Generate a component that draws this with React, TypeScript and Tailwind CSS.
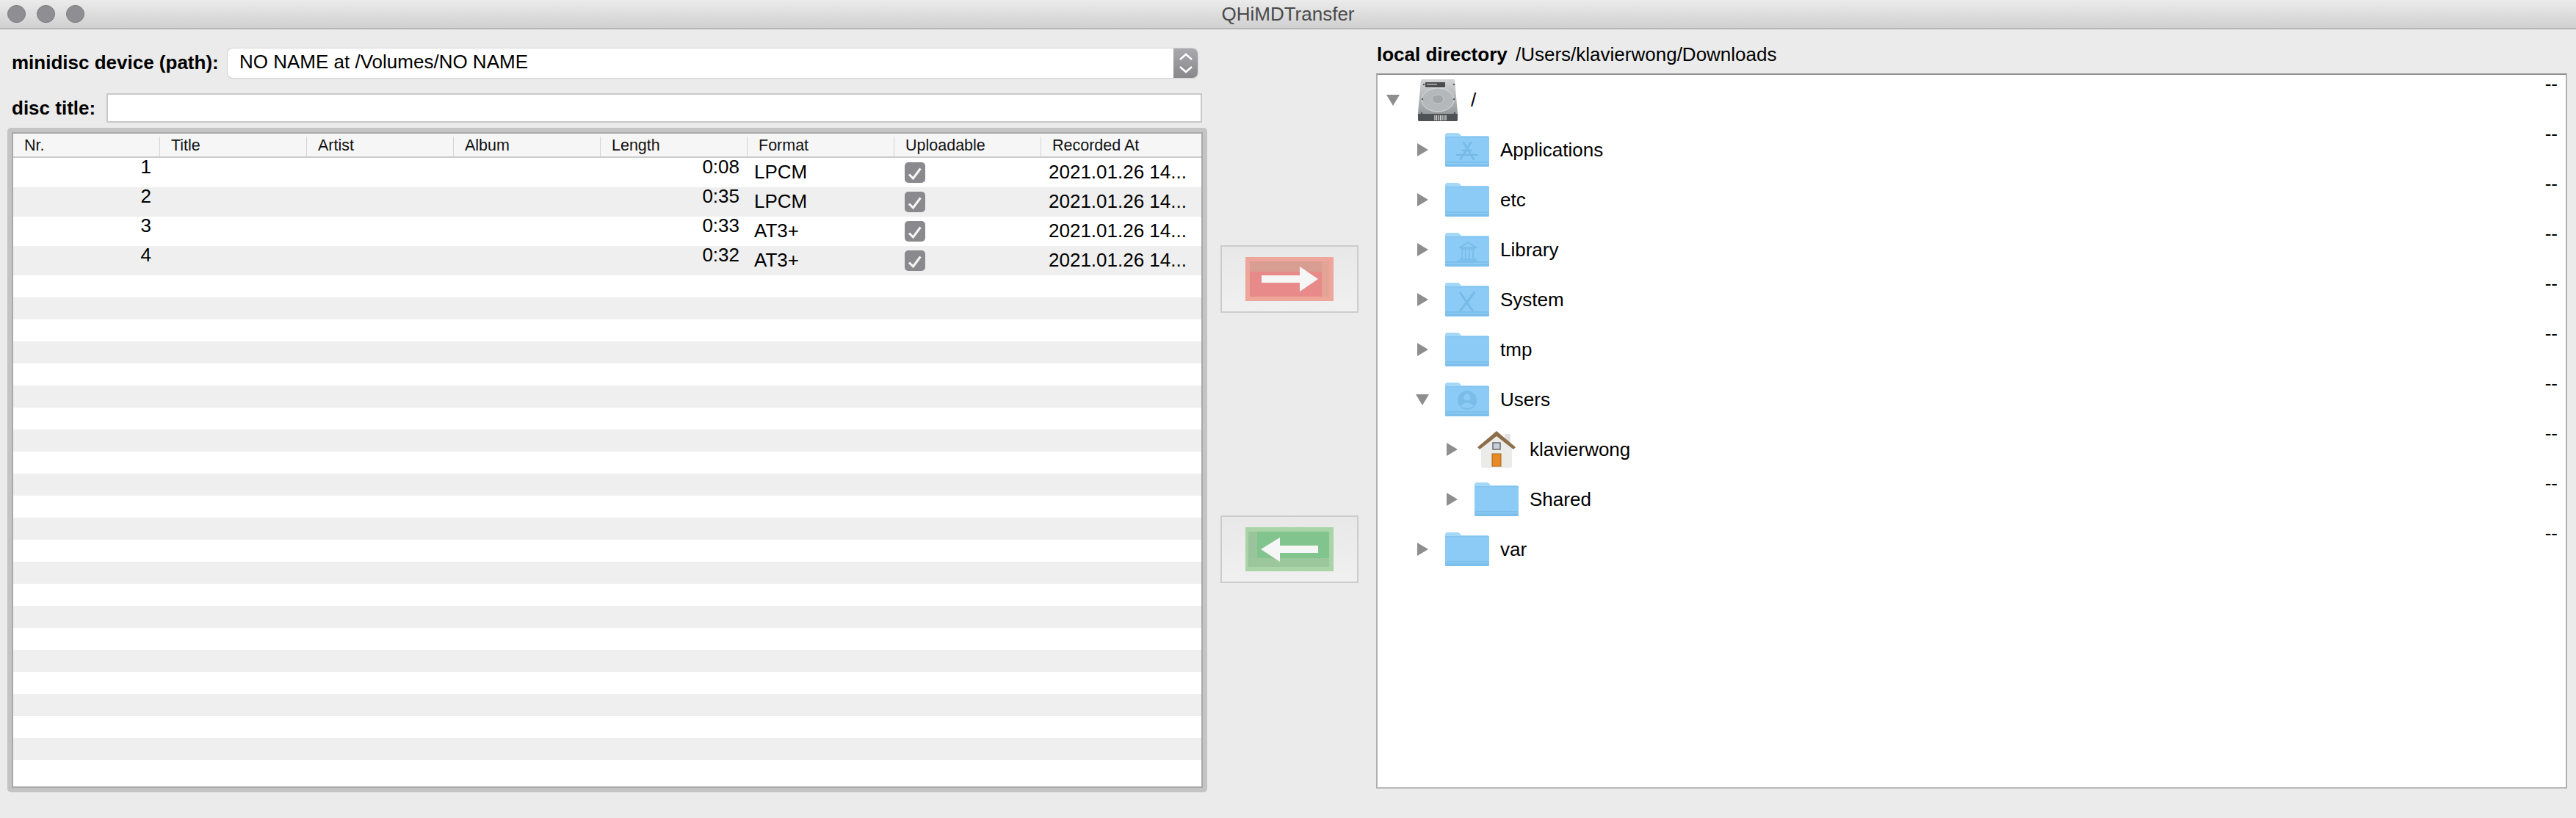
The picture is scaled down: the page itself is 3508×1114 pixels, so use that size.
const tracks = [
  { nr: 1, length: "0:08", format: "LPCM" },
  { nr: 2, length: "0:35", format: "LPCM" },
  { nr: 3, length: "0:33", format: "AT3+" },
  { nr: 4, length: "0:32", format: "AT3+" },
];

const columns = ["Nr.", "Title", "Artist", "Album", "Length", "Format", "Uploadable", "Recorded At"];

function Check() {
  return (
    <div className="w-[28px] h-[28px] rounded-[5px] bg-[#8a8a8e] flex items-center justify-center">
      <svg width="28" height="28" viewBox="0 0 28 28" fill="none">
        <path d="M6 16.500 L11.500 22 L21.500 8.500" stroke="#f6f6f6" strokeWidth="3" />
      </svg>
    </div>
  );
}

function TrackTable() {
  return (
    <div className="mt-[7px] h-[905px] rounded-[5px] border-[6px] border-[#c4c4c4] bg-white">
      <div className="h-full border-2 border-[#a8a8a8] overflow-hidden">
        <div className="flex h-[33px] bg-[#f6f6f6] border-b-2 border-[#cccccc] text-[21.5px] text-[#111]">
          {columns.map((c, i) => (
            <div key={c} className={`h-[27px] mt-[4px] shrink-0 pl-[15px] leading-[24px] ${i > 0 ? "w-[200px] border-l border-[#d4d4d4]" : "w-[199px]"}`}>
              {c}
            </div>
          ))}
        </div>
        {tracks.map((t, i) => (
          <div key={t.nr} className={`flex h-[40px] text-[26px] text-black ${i % 2 ? "bg-[#efefef]" : "bg-white"}`}>
            <div className="w-[188px] shrink-0 text-right leading-[24px]">{t.nr}</div>
            <div className="w-[801px] shrink-0 text-right leading-[24px]">{t.length}</div>
            <div className="w-[205px] shrink-0 pl-[20px] leading-[39px]">{t.format}</div>
            <div className="w-[216px] shrink-0 pl-[20px] flex items-center"><Check /></div>
            <div className="leading-[39px] whitespace-nowrap">2021.01.26 14...</div>
          </div>
        ))}
        {Array.from({ length: 23 }).map((_, i) => (
          <div key={i} className={`h-[30px] ${i % 2 ? "bg-[#efefef]" : "bg-white"}`} />
        ))}
      </div>
    </div>
  );
}

function ArrowButton({ dir }: { dir: "right" | "left" }) {
  const red = dir === "right";
  return (
    <div className="w-[188px] h-[92px] border-2 border-[#cccccc] bg-gradient-to-b from-[#e8e8e8] to-[#f0f0f0] flex items-center justify-center">
      <svg width="120" height="60" viewBox="0 0 120 60">
        <rect width="120" height="60" fill={red ? "#eda699" : "#a9d4a8"} />
        <rect x="6" y="6" width="108" height="48" fill={red ? "#e98a8a" : "#82c48e"} />
        {red ? (
          <>
            <rect x="6" y="6" width="108" height="14" fill="#d99e92" />
            <rect x="104" y="6" width="10" height="48" fill="#e3a396" />
            <path d="M22 25 H74 V13 L99 30 L74 47 V35 H22 Z" fill="#f6f6f6" />
          </>
        ) : (
          <>
            <rect x="4" y="6" width="12" height="48" fill="#9ac59c" />
            <rect x="6" y="42" width="108" height="12" fill="#9cc79c" />
            <path d="M99 25 H47 V14 L21 30 L47 47 V35 H99 Z" fill="#f6f6f6" />
          </>
        )}
      </svg>
    </div>
  );
}

function Folder({ glyph }: { glyph?: "apps" | "library" | "system" | "users" }) {
  const c = "#74bbe8";
  return (
    <svg width="60" height="46" viewBox="0 0 60 46" className="shrink-0">
      <path d="M0 3 Q0 0 3 0 H17 Q19 0 20 1.500 L22 4 H57 Q60 4 60 7 V12 H0 Z" fill="#a4d8f7" />
      <path d="M0 8 Q0 5.500 3 5.500 H57 Q60 5.500 60 8 V44 Q60 46 58 46 H2 Q0 46 0 44 Z" fill="#8ccbf5" />
      <rect x="0" y="39" width="60" height="7" rx="2" fill="#7cbfec" />
      <rect x="0" y="41" width="60" height="1" fill="#95d0f5" />
      <rect x="0" y="5" width="60" height="1.500" fill="#84c4f0" />
      {glyph === "apps" && (
        <path d="M25 13 L39 36 M35 13 L21 36 M16 30 H44 M24 24 H36" stroke={c} fill="none" strokeWidth="2.500" strokeLinecap="round" />
      )}
      {glyph === "library" && (
        <path d="M20 20 L31 13 L42 20 Z M21 22 H41 M23 23 V35 M28 23 V35 M33 23 V35 M38 23 V35 M20 36 H42 M16 38 H44" stroke={c} fill="none" strokeWidth="1.500" />
      )}
      {glyph === "system" && <path d="M20 13 L38 39 M40 13 L20 39" stroke={c} strokeWidth="3" fill="none" />}
      {glyph === "users" && (
        <g>
          <circle cx="30" cy="24" r="13" fill="#79bde8" />
          <circle cx="30" cy="20" r="4.500" fill="#8ccbf5" />
          <path d="M21 32 Q30 23 39 32 Q30 38 21 32 Z" fill="#8ccbf5" />
        </g>
      )}
    </svg>
  );
}

function HardDisk() {
  return (
    <svg width="56" height="57" viewBox="0 0 56 57" className="shrink-0">
      <defs>
        <linearGradient id="hd" x1="0" y1="0" x2="0" y2="1">
          <stop offset="0" stopColor="#d2d4d5" />
          <stop offset="1" stopColor="#8b8f91" />
        </linearGradient>
      </defs>
      <path d="M5 1 Q5 0 7 0 H49 Q51 0 51 1 L55 46 V55 Q55 57 53 57 H3 Q1 57 1 55 V46 Z" fill="url(#hd)" />
      <path d="M1 47 H55 V55 Q55 57 53 57 H3 Q1 57 1 55 Z" fill="#4f5254" />
      <path d="M24 49 V56 M26.500 49 V56 M29 49 V56 M31.500 49 V56 M34 49 V56 M36.500 49 V56 M39 49 V56" stroke="#e4e4e4" strokeWidth="1.200" />
      <rect x="11" y="4" width="27" height="7" fill="#4a4c4e" />
      <rect x="13" y="6" width="14" height="1.500" fill="#b8b8b8" />
      <rect x="11" y="11" width="27" height="1" fill="#e6e6e6" />
      <ellipse cx="28" cy="28" rx="22" ry="16" fill="#b5b8ba" stroke="#dcdedf" strokeWidth="1" />
      <ellipse cx="28" cy="27" rx="8" ry="6" fill="#a3a7a9" stroke="#c8cacb" />
      <circle cx="9" cy="7" r="1.200" fill="#555" />
      <circle cx="50" cy="7" r="1.200" fill="#555" />
      <circle cx="7" cy="27" r="1.200" fill="#555" />
      <circle cx="50" cy="27" r="1.200" fill="#555" />
      <circle cx="6" cy="46" r="1.200" fill="#555" />
      <circle cx="51" cy="46" r="1.200" fill="#555" />
    </svg>
  );
}

function HomeIcon() {
  return (
    <svg width="52" height="50" viewBox="0 0 52 50" className="shrink-0">
      <rect x="37" y="4" width="8" height="14" fill="#e2e2e2" />
      <path d="M5 19 L26 4 L47 19 V48 Q47 50 45 50 H7 Q5 50 5 48 Z" fill="#ebebe9" />
      <path d="M0 22 L26 0 L52 22 L49 25 L26 7 L3 25 Z" fill="#8c6f4a" />
      <rect x="21" y="16" width="10" height="9" fill="#c7d0da" stroke="#6b6b6b" strokeWidth="1.500" />
      <rect x="20" y="31" width="12" height="17" fill="#e88a26" stroke="#a8651c" />
    </svg>
  );
}

function Tri({ open }: { open?: boolean }) {
  return open ? (
    <svg width="18" height="15" viewBox="0 0 18 15" className="shrink-0">
      <path d="M0 0 H18 L9 15 Z" fill="#8e8e8e" />
    </svg>
  ) : (
    <svg width="15" height="18" viewBox="0 0 15 18" className="shrink-0">
      <path d="M0 0 L15 9 L0 18 Z" fill="#8e8e8e" />
    </svg>
  );
}

function TreeRow({ indent, open, icon, label }: { indent: string; open?: boolean; icon: React.ReactNode; label: string }) {
  return (
    <div className={`flex items-center h-[68px] text-[26px] text-black ${indent}`}>
      <div className="w-[38px] shrink-0 flex justify-center"><Tri open={open} /></div>
      <div className="w-[60px] ml-[12px] shrink-0 flex justify-center">{icon}</div>
      <span className="ml-[15px] flex-1">{label}</span>
      <span className="self-start mr-[11px] leading-[24px]">--</span>
    </div>
  );
}

export default function App() {
  return (
    <div className="w-[3508px] h-[1114px] bg-[#ebebeb] flex flex-col overflow-hidden font-['Liberation_Sans',Arial,sans-serif]">
      <div className="h-[40px] shrink-0 flex items-center relative border-b-2 border-[#b5b5b5] bg-gradient-to-b from-[#ebebeb] to-[#d0d0d0]">
        <div className="flex gap-[15px] pl-[10px]">
          <div className="w-[25px] h-[24px] rounded-full bg-[#8e8e93] border border-[#7b7b80]" />
          <div className="w-[25px] h-[24px] rounded-full bg-[#8e8e93] border border-[#7b7b80]" />
          <div className="w-[25px] h-[24px] rounded-full bg-[#8e8e93] border border-[#7b7b80]" />
        </div>
        <div className="absolute inset-x-0 text-center text-[26px] text-[#4a4a4a]">QHiMDTransfer</div>
      </div>

      <div className="flex flex-1">
        <div className="w-[1634px] ml-[10px] shrink-0">
          <div className="flex items-center h-[40px] mt-[26px] pl-[6px]">
            <div className="w-[294px] shrink-0 font-bold text-[26px] leading-[36px] h-[38px] text-black">minidisc device (path):</div>
            <div className="w-[1321px] h-[40px] flex rounded-[7px] bg-white shadow-[0_0_0_1px_#d4d4d4,0_1px_1px_#aaa] overflow-hidden">
              <div className="flex-1 pl-[16px] text-[26px] leading-[37px] text-black">NO NAME at /Volumes/NO NAME</div>
              <div className="w-[33px] bg-gradient-to-b from-[#aaaaae] to-[#88888c] flex items-center justify-center">
                <svg width="20" height="30" viewBox="0 0 20 30" fill="none" stroke="#ffffff" strokeWidth="2.500">
                  <path d="M2 10 L10 3 L18 10 M2 20 L10 27 L18 20" />
                </svg>
              </div>
            </div>
          </div>
          <div className="flex items-center h-[40px] mt-[21px] pl-[6px]">
            <div className="w-[129px] shrink-0 font-bold text-[26px] text-black">disc title:</div>
            <div className="w-[1492px] h-[40px] bg-white border-2 border-[#c8c8c8]" />
          </div>
          <TrackTable />
        </div>

        <div className="w-[188px] ml-[18px] shrink-0 pt-[294px] flex flex-col gap-[276px]">
          <ArrowButton dir="right" />
          <ArrowButton dir="left" />
        </div>

        <div className="w-[1622px] ml-[24px] shrink-0">
          <div className="h-[26px] mt-[21px] flex items-center text-[26px] text-black whitespace-nowrap pl-[1px]">
            <span className="font-bold w-[189px]">local directory</span>
            <span>/Users/klavierwong/Downloads</span>
          </div>
          <div className="mt-[13px] h-[974px] bg-white border-2 border-t-[#8f8f8f] border-x-[#b0b0b0] border-b-[#b8b8b8]">
            <TreeRow indent="pl-[2px]" open icon={<HardDisk />} label="/" />
            <TreeRow indent="pl-[42px]" icon={<Folder glyph="apps" />} label="Applications" />
            <TreeRow indent="pl-[42px]" icon={<Folder />} label="etc" />
            <TreeRow indent="pl-[42px]" icon={<Folder glyph="library" />} label="Library" />
            <TreeRow indent="pl-[42px]" icon={<Folder glyph="system" />} label="System" />
            <TreeRow indent="pl-[42px]" icon={<Folder />} label="tmp" />
            <TreeRow indent="pl-[42px]" open icon={<Folder glyph="users" />} label="Users" />
            <TreeRow indent="pl-[82px]" icon={<HomeIcon />} label="klavierwong" />
            <TreeRow indent="pl-[82px]" icon={<Folder />} label="Shared" />
            <TreeRow indent="pl-[42px]" icon={<Folder />} label="var" />
          </div>
        </div>
      </div>
    </div>
  );
}
